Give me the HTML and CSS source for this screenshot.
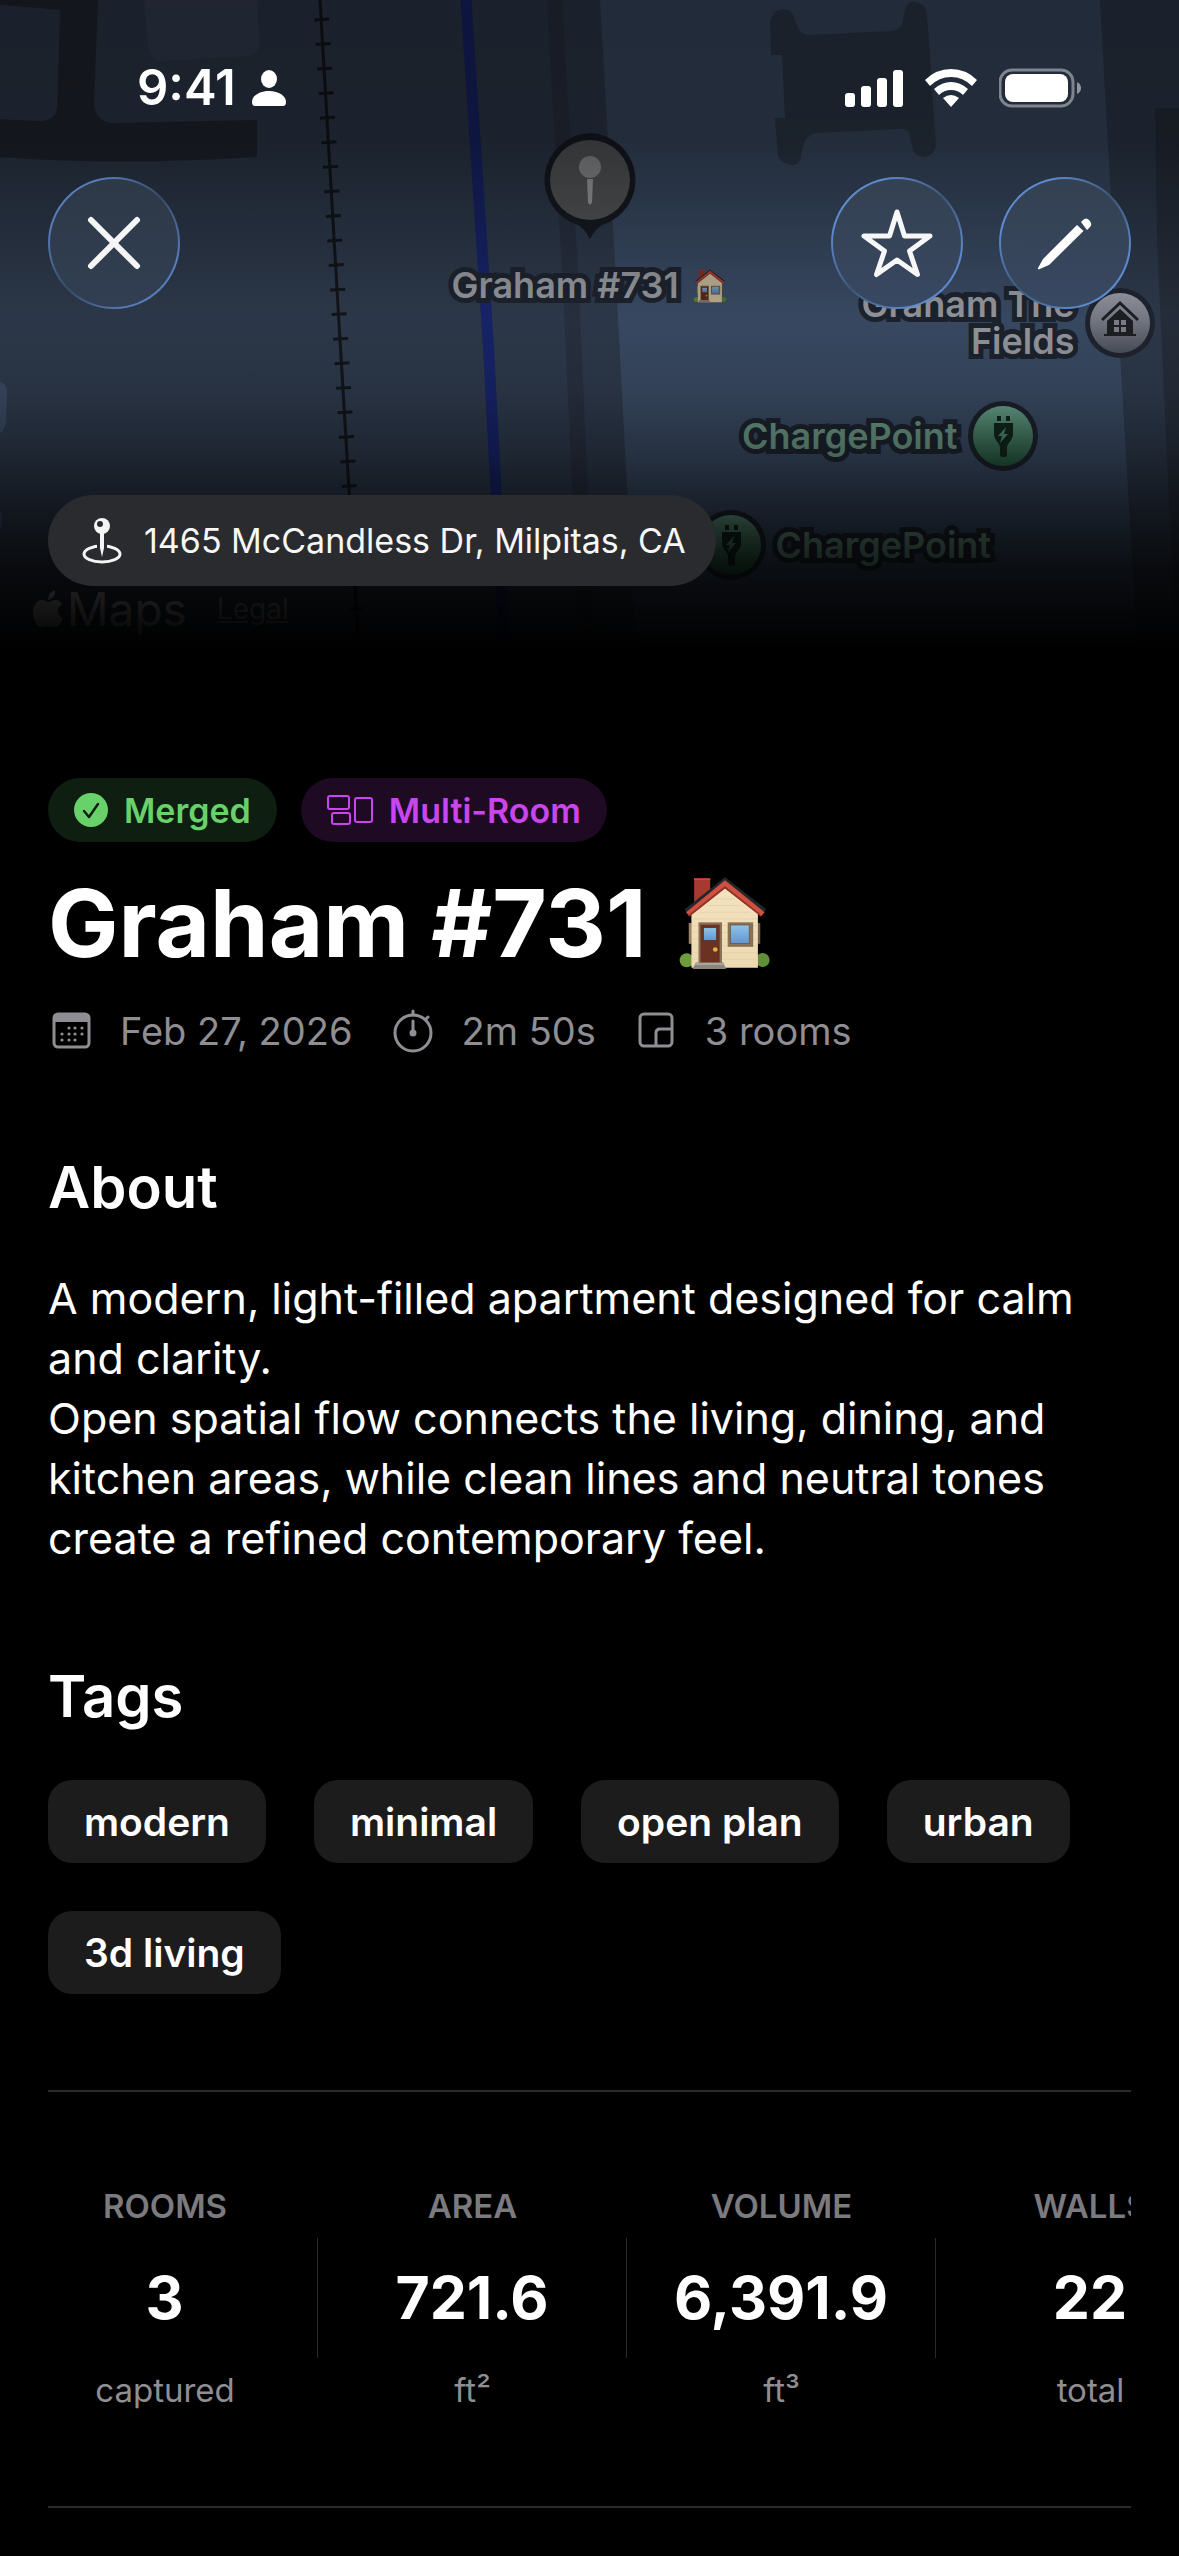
FILE: index.html
```html
<!DOCTYPE html>
<html lang="en">
<head>
<meta charset="utf-8">
<meta name="viewport" content="width=device-width, initial-scale=1">
<title>Graham #731</title>
<link rel="stylesheet" href="styles.css">
</head>
<body>
<svg class="defs" aria-hidden="true">
  <defs>
    <linearGradient id="wall" x1="0" y1="0" x2="0" y2="1"><stop offset="0" stop-color="#f3e3bf"/><stop offset="1" stop-color="#ecd9b2"/></linearGradient>
    <linearGradient id="glass" x1="0" y1="0" x2="0" y2="1"><stop offset="0" stop-color="#8fc4e8"/><stop offset="1" stop-color="#6496cf"/></linearGradient>
    <linearGradient id="green" x1="0" y1="0" x2="0" y2="1"><stop offset="0" stop-color="#68a28c"/><stop offset="1" stop-color="#23553c"/></linearGradient>
    <linearGradient id="grey" x1="0" y1="0" x2="0" y2="1"><stop offset="0" stop-color="#989ba6"/><stop offset="1" stop-color="#4d515b"/></linearGradient>
    <symbol id="house" viewBox="56 50 274 280">
      <rect x="101" y="57" width="48" height="70" fill="#a53a31"/>
      <rect x="101" y="57" width="48" height="5" fill="#c9493d"/>
      <rect x="85" y="190" width="9" height="62" fill="#9b8168"/>
      <rect x="289" y="190" width="9" height="62" fill="#6d5b49"/>
      <circle cx="79" cy="301" r="21" fill="#6f9a3e"/>
      <circle cx="305" cy="300" r="21" fill="#5f8f36"/>
      <path d="M93 158 193 78l98 80v165H93z" fill="url(#wall)"/>
      <path d="M93 178h198M93 198h198M93 218h198M93 238h198M93 258h198M93 278h198M93 298h198M118 158h150M140 138h106M163 118h60" stroke="#e0cda5" stroke-width="2"/>
      <path d="M72 150 193 54l123 95-8 10L193 70 80 160z" fill="#23262a"/>
      <path d="M77 158 193 63l118 95-11 13L193 87 87 171z" fill="#cf5041"/>
      <path d="M87 171 193 87l107 84-4-9-103-82L84 166z" fill="#8f352c"/>
      <rect x="114" y="188" width="70" height="122" fill="#8a7156"/>
      <rect x="120" y="195" width="57" height="113" fill="#6b3222"/>
      <rect x="129" y="204" width="39" height="38" fill="url(#glass)" stroke="#50271b" stroke-width="2"/>
      <circle cx="164" cy="269" r="7" fill="#e0b13c"/>
      <rect x="201" y="188" width="76" height="73" fill="#8a7156"/>
      <rect x="209" y="196" width="56" height="55" fill="url(#glass)" stroke="#5f5140" stroke-width="2"/>
      <path d="M106 308h82l8 19H97z" fill="#8b857c"/>
      <path d="M106 309h82l3 6h-88z" fill="#aba69d"/>
    </symbol>
    <symbol id="charger" viewBox="0 0 70 70">
      <circle cx="35" cy="35" r="35" fill="#1c222c"/>
      <circle cx="35" cy="35" r="30" fill="url(#green)"/>
      <path d="M29 15h4v5h-4zM38 15h4v5h-4zM26 22h19v11c0 6-5 8-6 13v8c0 2-1 2-3 2s-4 0-4-2v-8c-1-5-6-7-6-13z" fill="#10271d"/>
      <path d="M38 26l-8 9h4l-2 7 8-9h-4z" fill="#4f8570"/>
    </symbol>
  </defs>
</svg>

<header class="hero">
  <div class="map">
    <svg class="terrain" viewBox="0 0 1179 656" preserveAspectRatio="xMidYMin slice" aria-hidden="true">
      <rect width="1179" height="656" fill="#2d394b"/>
      <path d="M600 0h500l14 250 24 406H636L616 280z" fill="#394a63"/>
      <path d="M1100 0h79v656h-41z" fill="#2d394b"/>
      <path d="M1155 108h24v500h-5L1157 240z" fill="#262e3b"/>
      <path d="M0 5 60 10 57 105q-1 16-17 16L0 119v38q120 9 257 0v-37l-143 3q-18 0-20-19L98 0H0z" fill="#212530"/>
      <path d="M0 5 60 10 57 105q-1 16-17 16L0 119z" fill="#2d394b"/>
      <path d="M144 0h113l2 44q0 10-10 12l-85 5q-14 0-16-14z" fill="#373f55"/>
      <path d="M0 382q8 2 7 12l-1 28q-2 10-6 11zM0 510q3 5 2 14l-2 6z" fill="#3a4963"/>
      <path d="M547 0h15l17 290 16 366h-15L563 290z" fill="#283040"/>
      <path d="M770 22q2-12 12-13 9 0 11 6l5 13q3 6 10 7l84-4q9-3 10-7l4-17q3-6 9-5 9 2 11 7l2 18 8 120q-3 9-12 10-9-1-11-7l-4-17q-3-5-11-4l-83 4q-9 4-11 10l-4 17q-3 6-9 5-10-2-13-8l-3-39h10l-3-63h-11z" fill="#2c3849"/>
      <path d="M466 0 488 340 504 640" fill="none" stroke="#17246a" stroke-width="11"/>
      <path d="M320 0 340 340 358 640" fill="none" stroke="#12151a" stroke-width="3"/>
      <path d="M321 8 358 632" fill="none" stroke="#12151a" stroke-width="15" stroke-dasharray="3 21.6" stroke-dashoffset="-10"/>
    </svg>

    <svg class="pin" viewBox="0 0 94 112" aria-hidden="true">
      <path d="M47 0a47 47 0 0 1 12 92q-7 4-12 14-5-10-12-14A47 47 0 0 1 47 0z" fill="#161a22"/>
      <circle cx="47" cy="47" r="40" fill="#555759"/>
      <circle cx="47" cy="34" r="11" fill="#8f9194"/>
      <path d="M44 46h6l-1 23q-2 5-4 0z" fill="#a0a2a4"/>
    </svg>
    <div class="place place-home">Graham #731<svg class="emoji-small" role="img" aria-label="house"><use href="#house"/></svg></div>

    <div class="place place-fields"><span>Graham The<br>Fields</span>
      <svg class="poi" viewBox="0 0 70 70" aria-hidden="true">
        <circle cx="35" cy="35" r="35" fill="#1f2430"/>
        <circle cx="35" cy="35" r="30" fill="url(#grey)"/>
        <path d="M17 32 35 15l18 17" fill="none" stroke="#1d1f23" stroke-width="3"/>
        <path d="M22 33 35 21l13 12v13h3v2H19v-2h3z" fill="#1d1f23"/>
        <path d="M29 32h5v5h-5zM36 32h5v5h-5zM29 39h5v5h-5zM36 39h5v5h-5z" fill="#7d808a"/>
      </svg>
    </div>
    <div class="place place-charge-a place-green"><span>ChargePoint</span><svg class="poi" aria-hidden="true"><use href="#charger"/></svg></div>
    <div class="place place-charge-b place-green"><svg class="poi" aria-hidden="true"><use href="#charger"/></svg><span>ChargePoint</span></div>

    <div class="attribution">
      <svg class="apple" viewBox="0 0 30 38" aria-hidden="true"><path d="M22 0q1 8-7 10 0-8 7-10zM15 12c3 0 4-2 8-2 3 0 5 2 6 4-6 4-5 12 1 14-2 5-5 9-8 9s-4-1-7-1-4 1-7 1C4 37 0 29 0 22c0-8 5-12 9-12 3 0 4 2 6 2z" fill="#ddd"/></svg>
      <span>Maps</span>
      <a href="#legal">Legal</a>
    </div>
    <div class="shade"></div>
  </div>

  <div class="statusbar">
    <div class="clock">9:41
      <svg width="34" height="38" viewBox="0 0 34 38" aria-hidden="true"><ellipse cx="17" cy="10" rx="8" ry="9" fill="#fff"/><path d="M0 33C0 27 7 22 17 22s17 5 17 11q0 4-3 4H3q-3 0-3-4z" fill="#fff"/></svg>
    </div>
    <div class="indicators">
      <svg width="58" height="38" viewBox="0 0 58 38" aria-hidden="true" fill="#fff"><rect y="24" width="10" height="14" rx="3"/><rect x="16" y="17" width="10" height="21" rx="3"/><rect x="32" y="9" width="10" height="29" rx="3"/><rect x="48" y="1" width="10" height="37" rx="3"/></svg>
      <svg width="52" height="38" viewBox="0 0 52 38" aria-hidden="true" fill="#fff"><path d="M26 0q15 0 26 11l-5 6Q38 8 26 8T5 17L0 11Q11 0 26 0z"/><path d="M26 13q9 0 17 7l-5 6q-5-5-12-5t-12 5l-5-6q8-7 17-7z"/><path d="M26 26q4 0 8 3l-8 9-8-9q4-3 8-3z"/></svg>
      <svg width="82" height="40" viewBox="0 0 82 40" aria-hidden="true"><rect x="1" y="2" width="73" height="36" rx="12" fill="none" stroke="#fff" stroke-opacity=".42" stroke-width="3"/><rect x="6" y="6" width="63" height="28" rx="8" fill="#fff"/><path d="M78 14q4 2 4 6t-4 6z" fill="#fff" fill-opacity=".5"/></svg>
    </div>
  </div>

  <div class="toolbar">
    <button class="round round-dim" type="button" aria-label="Close"><svg viewBox="0 0 132 132"><path d="M43 43 89 89M89 43 43 89" stroke="#f5f5f5" stroke-width="6" stroke-linecap="round"/></svg></button>
    <div class="actions">
      <button class="round" type="button" aria-label="Favourite"><svg viewBox="0 0 132 132"><path d="M66 35 73.500 59H99L78.500 74 86.500 97.500 66 83 45.500 97.500 53.500 74 33 59H58.500z" fill="none" stroke="#f7f7f7" stroke-width="5" stroke-linejoin="round"/></svg></button>
      <button class="round" type="button" aria-label="Edit"><svg viewBox="0 0 132 132"><path d="M78 48 84.500 54 50 88 39.500 92.500Q38.500 92 39 91L44 82zM82 45l2-2q3-3 6 0 4 4 1 7l-3 3z" fill="#fff"/></svg></button>
    </div>
  </div>

  <address class="address">
    <svg width="40" height="46" viewBox="0 0 40 46" aria-hidden="true"><ellipse cx="20" cy="36" rx="18" ry="8" fill="none" stroke="#f5f5f5" stroke-width="3"/><path d="M15 24h10v8H15z" fill="#292b2e"/><path d="M18 14h4v16l-2 9-2-9z" fill="#f5f5f5"/><circle cx="20" cy="8" r="8" fill="#f5f5f5"/><circle cx="18" cy="6" r="3" fill="#292b2e"/></svg>
    <span>1465 McCandless Dr, Milpitas, CA</span>
  </address>
</header>

<main class="content">
  <div class="badges">
    <span class="badge badge-green">
      <svg width="34" height="34" viewBox="0 0 34 34" aria-hidden="true"><circle cx="17" cy="17" r="17" fill="#68d16a"/><path d="M10 18l5 6 9-13" fill="none" stroke="#0e1e10" stroke-width="2.500" stroke-linecap="round" stroke-linejoin="round"/></svg>
      Merged
    </span>
    <span class="badge badge-purple">
      <svg width="46" height="30" viewBox="0 0 46 30" aria-hidden="true" fill="none" stroke="#cb45ee" stroke-width="2"><rect x="1" y="1" width="21" height="13" rx="2"/><rect x="5" y="18" width="18" height="11" rx="2"/><rect x="28" y="3" width="17" height="24" rx="2"/></svg>
      Multi-Room
    </span>
  </div>

  <h1>Graham #731 <svg class="emoji" role="img" aria-label="house"><use href="#house"/></svg></h1>

  <ul class="meta">
    <li>
      <svg width="40" height="44" viewBox="0 0 40 44" aria-hidden="true"><rect x="3" y="5" width="35" height="33" rx="4" fill="none" stroke="#8e8e93" stroke-width="3"/><path d="M3 5h35v8H3z" fill="#8e8e93"/><g fill="#8e8e93"><circle cx="18" cy="19" r="1.600"/><circle cx="24" cy="19" r="1.600"/><circle cx="31" cy="19" r="1.600"/><circle cx="11" cy="25" r="1.600"/><circle cx="18" cy="25" r="1.600"/><circle cx="24" cy="25" r="1.600"/><circle cx="31" cy="25" r="1.600"/><circle cx="11" cy="31" r="1.600"/><circle cx="18" cy="31" r="1.600"/><circle cx="24" cy="31" r="1.600"/></g></svg>
      Feb 27, 2026
    </li>
    <li>
      <svg width="40" height="44" viewBox="0 0 40 44" aria-hidden="true"><circle cx="20" cy="24" r="18" fill="none" stroke="#8e8e93" stroke-width="3"/><path d="M20 2v4M33 10l2-2M20 12v12" stroke="#8e8e93" stroke-width="3" stroke-linecap="round"/><circle cx="20" cy="24" r="3.500" fill="#8e8e93"/></svg>
      2m 50s
    </li>
    <li>
      <svg width="40" height="44" viewBox="0 0 40 44" aria-hidden="true" fill="none" stroke="#8e8e93" stroke-width="3"><rect x="4" y="5" width="32" height="32" rx="4"/><path d="M36 20H24q-4 0-4 4v13"/></svg>
      3 rooms
    </li>
  </ul>

  <section class="about">
    <h2>About</h2>
    <p>A modern, light-filled apartment designed for calm and clarity.<br>Open spatial flow connects the living, dining, and kitchen areas, while clean lines and neutral tones create a refined contemporary feel.</p>
  </section>

  <section class="tagged">
    <h2>Tags</h2>
    <ul class="tags">
      <li>modern</li>
      <li>minimal</li>
      <li>open plan</li>
      <li>urban</li>
      <li>3d living</li>
    </ul>
  </section>

  <dl class="stats">
    <div><dt>ROOMS</dt><dd class="value">3</dd><dd class="unit">captured</dd></div>
    <div><dt>AREA</dt><dd class="value">721.6</dd><dd class="unit">ft²</dd></div>
    <div><dt>VOLUME</dt><dd class="value">6,391.9</dd><dd class="unit">ft³</dd></div>
    <div><dt>WALLS</dt><dd class="value">22</dd><dd class="unit">total</dd></div>
  </dl>
</main>
</body>
</html>
```
FILE: styles.css
```css
* { box-sizing: border-box; }

body {
  margin: 0;
  background: #000;
  color: #fff;
  font-family: Inter, "Liberation Sans", sans-serif;
}

h1, h2, p, ul, dl, dd { margin: 0; padding: 0; }
ul { list-style: none; }
svg { display: block; flex: none; }
.defs { position: absolute; width: 0; height: 0; }

/* Map header */
.hero {
  position: relative;
  display: flex;
  flex-direction: column;
  align-items: stretch;
  min-height: 656px;
  overflow: hidden;
}

.map, .shade, .terrain { position: absolute; inset: 0; }
.terrain { width: 100%; height: 100%; }
.shade {
  background: linear-gradient(
    rgba(0, 0, 0, .42) 0,
    rgba(0, 0, 0, .4) 140px,
    rgba(0, 0, 0, .2) 240px,
    rgba(0, 0, 0, .03) 320px,
    rgba(0, 0, 0, .12) 390px,
    rgba(0, 0, 0, .32) 450px,
    rgba(0, 0, 0, .55) 500px,
    rgba(0, 0, 0, .82) 570px,
    #000 650px
  );
}

.place {
  position: absolute;
  display: flex;
  align-items: center;
  font-size: 36px;
  line-height: 37px;
  font-weight: 600;
  color: #94979d;
  white-space: nowrap;
  -webkit-text-stroke: 10px #1d232e;
  paint-order: stroke fill;
}
.place-green { color: #6c9a87; }
.poi { width: 70px; height: 70px; }
.pin { position: absolute; left: calc(50% - 47px); top: 133px; width: 94px; height: 112px; }
.place-home { left: calc(50% - 138px); top: 267px; gap: 14px; }
.emoji-small { width: 34px; height: 34px; filter: brightness(.8); }
.place-fields { right: calc(50% - 565px); top: 286px; gap: 10px; text-align: right; }
.place-charge-a { right: calc(50% - 448px); top: 401px; gap: 10px; }
.place-charge-b { left: calc(50% + 106px); top: 510px; gap: 10px; }

.attribution {
  position: absolute;
  left: 33px;
  top: 579px;
  display: flex;
  align-items: center;
  font-size: 46px;
  line-height: 60px;
  color: #ddd;
}
.apple { width: 30px; height: 38px; margin-right: 4px; }
.attribution a { margin-left: 30px; font-size: 28px; color: #aaa; }

.statusbar, .toolbar, .address { position: relative; }

.statusbar {
  display: flex;
  justify-content: space-between;
  align-items: center;
  height: 177px;
  padding: 0 98px 2px 137px;
}
.clock { display: flex; align-items: center; gap: 16px; font-size: 49px; font-weight: 600; }
.indicators { display: flex; align-items: center; gap: 22px; }

.toolbar { display: flex; justify-content: space-between; padding: 0 48px; }
.actions { display: flex; gap: 36px; }

.round {
  width: 132px;
  height: 132px;
  padding: 0;
  border: 2px solid transparent;
  border-radius: 50%;
  background:
    linear-gradient(#344152, #384861) padding-box,
    linear-gradient(135deg, #5e8bd0, #5e8bd0 20%, #3f5779 50%, #5e8bd0 80%) border-box;
}
.round-dim {
  background:
    linear-gradient(#2d3947, #323f53) padding-box,
    linear-gradient(135deg, #567dbb, #567dbb 20%, #384a66 50%, #567dbb 80%) border-box;
}
.round svg { width: 132px; height: 132px; margin: -2px; }

.address {
  display: flex;
  align-items: center;
  align-self: flex-start;
  gap: 22px;
  height: 91px;
  margin: auto 48px 70px;
  padding: 0 30px 0 34px;
  border-radius: 46px;
  background: #292b2e;
  color: #f7f7f7;
  font-size: 34px;
  font-style: normal;
  font-weight: 400;
}

/* Details */
.content { padding: 122px 48px 48px; }

.badges { display: flex; gap: 24px; }
.badge {
  display: flex;
  align-items: center;
  gap: 16px;
  height: 64px;
  padding: 0 26px;
  border-radius: 32px;
  font-size: 34px;
  font-weight: 600;
}
.badge-green { background: #0e1e10; color: #68d16a; }
.badge-purple { background: #1e0a22; color: #cb45ee; }

h1 {
  display: flex;
  align-items: center;
  gap: 32px;
  margin-top: 25px;
  font-size: 94px;
  line-height: 112px;
  font-weight: 700;
}
.emoji { width: 92px; height: 94px; }

.meta {
  display: flex;
  gap: 40px;
  margin-top: 28px;
  padding-left: 3px;
  font-size: 38px;
  line-height: 48px;
  color: #8e8e93;
}
.meta li { display: flex; align-items: center; gap: 29px; }

h2 { font-size: 58px; line-height: 72px; font-weight: 600; }
.about { margin-top: 96px; }
.tagged { margin-top: 92px; }
.about p { margin-top: 45px; font-size: 43px; line-height: 60px; }

.tags { display: flex; flex-wrap: wrap; gap: 48px; margin-top: 48px; }
.tags li {
  padding: 0 36px;
  border-radius: 24px;
  background: #1c1c1c;
  font-size: 39px;
  line-height: 83px;
  font-weight: 600;
}

.stats {
  display: flex;
  margin-top: 96px;
  padding: 94px 0 96px;
  border: solid #2b2b2d;
  border-width: 2px 0;
  overflow-x: auto;
  scrollbar-width: none;
  text-align: center;
}
.stats div { display: grid; flex: none; gap: 12px; width: 309px; }
.stats dt, .stats .unit { font-size: 33px; line-height: 40px; color: #8e8e93; }
.stats dt { font-weight: 600; color: #7a7a7f; }
.stats .value {
  border-right: 1px solid #2b2b2d;
  font-size: 59px;
  line-height: 120px;
  font-weight: 700;
}
.stats div:first-child { width: 270px; }
.stats div:first-child > * { padding-right: 36px; }
```
